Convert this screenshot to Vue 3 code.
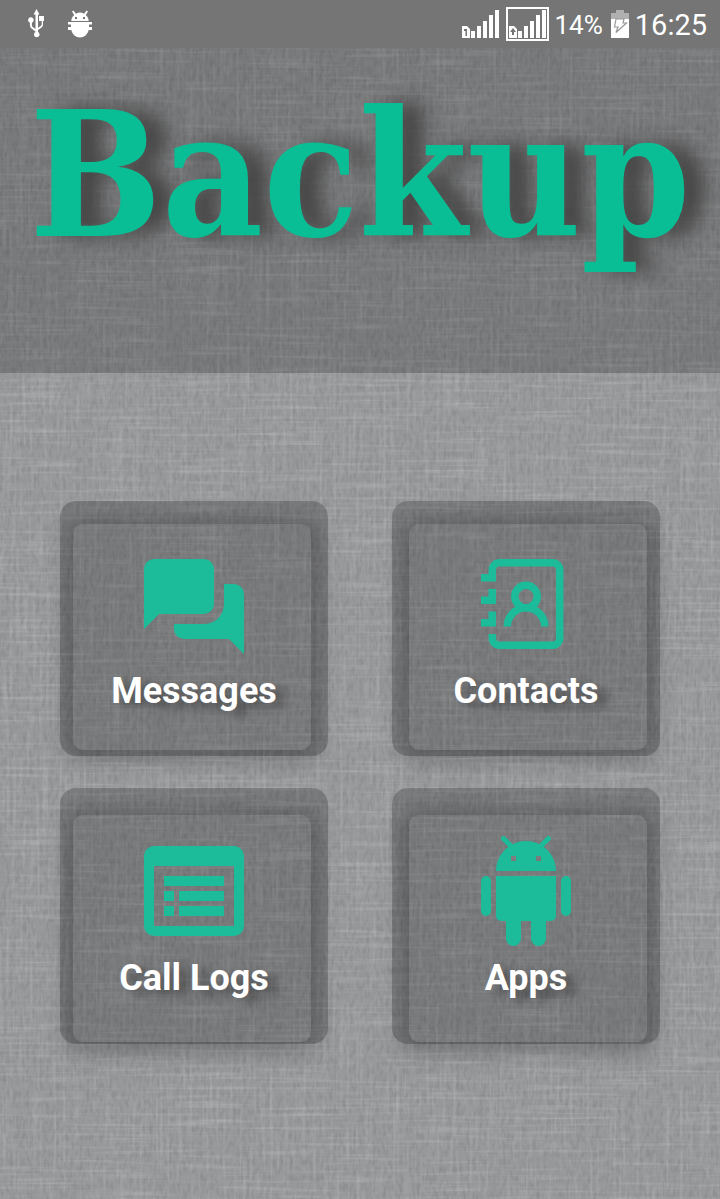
<script setup>
const items = [
  { id: 'messages', label: 'Messages' },
  { id: 'contacts', label: 'Contacts' },
  { id: 'logs', label: 'Call Logs' },
  { id: 'apps', label: 'Apps' }
]
</script>

<template>
  <div class="screen">
    <svg class="fabric" aria-hidden="true">
      <filter id="weft" x="0" y="0" width="100%" height="100%" color-interpolation-filters="sRGB">
        <feTurbulence type="fractalNoise" baseFrequency="0.012 0.3" numOctaves="2" seed="4" />
        <feColorMatrix values="0 0 0 0 1  0 0 0 0 1  0 0 0 0 1  0.4 0 0 0 -0.2" />
      </filter>
      <filter id="warp" x="0" y="0" width="100%" height="100%" color-interpolation-filters="sRGB">
        <feTurbulence type="fractalNoise" baseFrequency="0.3 0.012" numOctaves="2" seed="9" />
        <feColorMatrix values="0 0 0 0 1  0 0 0 0 1  0 0 0 0 1  0.3 0 0 0 -0.14" />
      </filter>
      <filter id="grain" x="0" y="0" width="100%" height="100%" color-interpolation-filters="sRGB">
        <feTurbulence type="fractalNoise" baseFrequency="0.3 0.12" numOctaves="2" seed="2" />
        <feColorMatrix values="0 0 0 0 0  0 0 0 0 0  0 0 0 0 0  0.2 0 0 0 -0.08" />
      </filter>
      <rect width="100%" height="100%" filter="url(#grain)" />
      <rect width="100%" height="100%" filter="url(#weft)" />
      <rect width="100%" height="100%" filter="url(#warp)" />
    </svg>

    <div class="status">
      <div class="group notices">
        <svg width="18" height="30" viewBox="0 0 18 30" fill="#fff" aria-label="USB connected">
          <path d="M8.500 0l3 5.500H10v13.200l3-2c.5-.5.700-1 .700-2V12H11V7h5v5h-1v3c0 1.800-.5 2.800-1.700 3.700L10 21v2a2.800 2.800 0 1 1-2.500 0v-.5l-4-3c-1.200-1-1.600-2-1.600-3.700v-2.100a2.800 2.800 0 1 1 2 0v2.300c0 1 .2 1.500.8 2L7.500 20V5.500H5.500z" />
        </svg>
        <svg width="24" height="28" viewBox="0 0 24 28" fill="#fff" aria-label="Debugging">
          <path fill-rule="evenodd" d="M4 1.500l1.500-1 2.400 3.200A9 9 0 0 1 12 2.500a9 9 0 0 1 4.100 1.200L18.500.5l1.500 1-2.200 3.600C19.600 6.500 20.500 8.400 20.700 11H3.300C3.500 8.400 4.400 6.500 6.200 5.100zM7 7v2h2V7zm8 0v2h2V7z" />
          <path d="M0 12h24v2.500h-3V17h3v3h-3.300c-1 4.500-4.500 7.500-8.700 7.500S4.300 24.500 3.300 20H0v-3h3v-2.500H0z" />
        </svg>
      </div>
      <div class="group">
        <svg width="38" height="30" viewBox="0 0 38 30" fill="#fff" aria-label="SIM 1 signal">
          <path fill-rule="evenodd" d="M0 17h5l3 3v9H0zM2 20v2h1.500v5H5v-7z" />
          <path d="M9 22h4v7H9zM15 17h4v12h-4zM21 12h4v17h-4zM27 6h4v23h-4zM33 1h4v28h-4z" />
        </svg>
        <svg class="sim-two" width="43" height="34" viewBox="0 0 43 34" fill="#fff" aria-label="SIM 2 signal">
          <path d="M1 1h41v32H1z" fill="none" stroke="#fff" stroke-width="2" />
          <path fill-rule="evenodd" d="M3 19h5l3 3v9H3zM7 21l-3 4h2v3h2v-3h2z" />
          <path d="M12 24h4v7h-4zM18 19h4v12h-4zM24 14h4v17h-4zM30 8h4v23h-4zM36 3h4v28h-4z" />
        </svg>
        <span class="percent">14%</span>
        <svg class="battery" width="18" height="28" viewBox="0 0 18 28" aria-label="Charging">
          <path d="M5 0h8v3h5v6H0V3h5z" fill="#b0b0b0" />
          <path d="M0 9h18v19H0z" fill="#fff" />
          <path d="M5 9h8l-1 4h3.500L5 22.500 7 17H3.500z" fill="#fff" stroke="#999" stroke-width="1.200" />
        </svg>
        <time class="clock">16:25</time>
      </div>
    </div>

    <header class="hero">
      <h1>Backup</h1>
    </header>

    <main class="menu">
      <button v-for="item in items" :key="item.id" type="button" class="card">
        <span class="pane">
          <svg v-if="item.id === 'messages'" class="icon" viewBox="0 0 24 24" aria-hidden="true">
            <path d="M4 2h10a2 2 0 0 1 2 2v7a2 2 0 0 1-2 2H5l-3 3V4a2 2 0 0 1 2-2z" />
            <path d="M18 7h2a2 2 0 0 1 2 2v12l-3-3h-9a2 2 0 0 1-2-2v-1h6a4 4 0 0 0 4-4z" />
          </svg>
          <svg v-else-if="item.id === 'contacts'" class="icon outline" viewBox="0 0 120 120" aria-hidden="true">
            <path d="M15 28.750h11.250V21a7.250 7.250 0 0 1 7.250-7.250h53a7.250 7.250 0 0 1 7.250 7.250v68a7.250 7.250 0 0 1-7.250 7.250h-53A7.250 7.250 0 0 1 26.250 89v-4M26.250 28v4.500M15 51.250h11.250V40M26.250 50v5M15 73.750h11.250V62.500M26.250 72v5.500M22.500 28.750H30M22.500 51.250H30M22.500 73.750H30" />
            <circle cx="60" cy="47.500" r="11.250" />
            <path d="M41.250 77.500a18.750 18.750 0 0 1 37.500 0" />
          </svg>
          <svg v-else-if="item.id === 'logs'" class="icon" viewBox="0 0 24 24" aria-hidden="true">
            <path fill-rule="evenodd" d="M4 2h16a2 2 0 0 1 2 2v14a2 2 0 0 1-2 2H4a2 2 0 0 1-2-2V4a2 2 0 0 1 2-2zM4 6v12h16V6z" />
            <path d="M6 8h12v2H6zM6 11h2v2H6zM9 11h9v2H9zM6 14h2v2H6zM9 14h9v2H9z" />
          </svg>
          <svg v-else class="icon" viewBox="0 0 24 24" aria-hidden="true">
            <path d="M15.530 2.160l1.300-1.300c.2-.2.2-.51 0-.71-.2-.2-.51-.2-.71 0l-1.480 1.480C13.850 1.230 12.950 1 12 1c-.96 0-1.860.23-2.660.63L7.850.15c-.2-.2-.51-.2-.71 0-.2.2-.2.51 0 .71l1.310 1.310C6.970 3.260 6 5.010 6 7h12c0-1.990-.97-3.750-2.470-4.840zM10 5H9V4h1v1zm5 0h-1V4h1v1z" />
            <path d="M6 8h12v8a1 1 0 0 1-1 1h-1v3.500a1.500 1.500 0 0 1-3 0V17h-2v3.500a1.500 1.500 0 0 1-3 0V17H7a1 1 0 0 1-1-1z" />
            <rect x="3" y="8" width="2" height="8" rx="1" />
            <rect x="19" y="8" width="2" height="8" rx="1" />
          </svg>
          <span class="label">{{ item.label }}</span>
        </span>
      </button>
    </main>
  </div>
</template>

<style>
body {
  margin: 0;
  background: #98999b;
}
</style>

<style scoped>
.screen {
  position: relative;
  isolation: isolate;
  display: flex;
  flex-direction: column;
  min-height: 100vh;
  overflow: hidden;
  background: #98999b;
  font-family: Roboto, "Noto Sans", sans-serif;
}
.fabric {
  position: absolute;
  inset: 0;
  z-index: -1;
  width: 100%;
  height: 100%;
}
.status {
  display: flex;
  align-items: center;
  justify-content: space-between;
  height: 48px;
  padding: 0 13px 0 28px;
  background: #757575;
  color: #fff;
}
.group {
  display: flex;
  align-items: center;
}
.notices {
  gap: 22px;
}
.sim-two {
  margin-left: 6px;
}
.percent {
  margin-left: 6px;
  font-size: 26px;
  line-height: 32px;
  padding-top: 2px;
}
.battery {
  margin-left: 8px;
}
.clock {
  margin-left: 6px;
  padding-top: 2px;
  font-size: 29px;
  line-height: 32px;
}
.hero {
  height: 325px;
  background: rgba(0, 0, 0, 0.2);
  text-align: center;
}
h1 {
  margin: 0;
  padding-top: 27px;
  color: #09be94;
  font-family: "DejaVu Serif Condensed", "DejaVu Serif", serif;
  font-size: 174px;
  font-weight: bold;
  line-height: 200px;
  text-shadow: 20px 0 20px #444;
}
.menu {
  display: grid;
  grid-template-columns: 1fr 1fr;
  gap: 32px 64px;
  padding: 128px 60px;
}
.card {
  display: flex;
  min-height: 255px;
  padding: 23px 17px 6px 13px;
  border: 0;
  border-radius: 16px;
  background: rgba(0, 0, 0, 0.2);
  font: inherit;
  cursor: pointer;
}
.card:nth-child(even) {
  padding-right: 13px;
  padding-left: 17px;
}
.card:nth-child(n + 3) {
  min-height: 256px;
  padding-top: 27px;
  padding-bottom: 2px;
}
.pane {
  display: flex;
  flex: 1;
  flex-direction: column;
  align-items: center;
  align-self: stretch;
  padding: 25px 0 0 4px;
  border-radius: 10px;
  box-shadow: 0 4px 20px 8px rgba(0, 0, 0, 0.22);
}
.card:nth-child(even) .pane {
  padding-right: 4px;
  padding-left: 0;
}
.card:nth-child(n + 3) .pane {
  padding-top: 21px;
}
.icon {
  width: 120px;
  height: 120px;
  fill: #1cbc9b;
}
.outline {
  fill: none;
  stroke: #1cbc9b;
  stroke-width: 7.5;
}
.label {
  color: #fff;
  font-size: 36px;
  font-weight: bold;
  line-height: 44px;
  text-shadow: 10px 5px 10px rgba(0, 0, 0, 0.4);
}
</style>
